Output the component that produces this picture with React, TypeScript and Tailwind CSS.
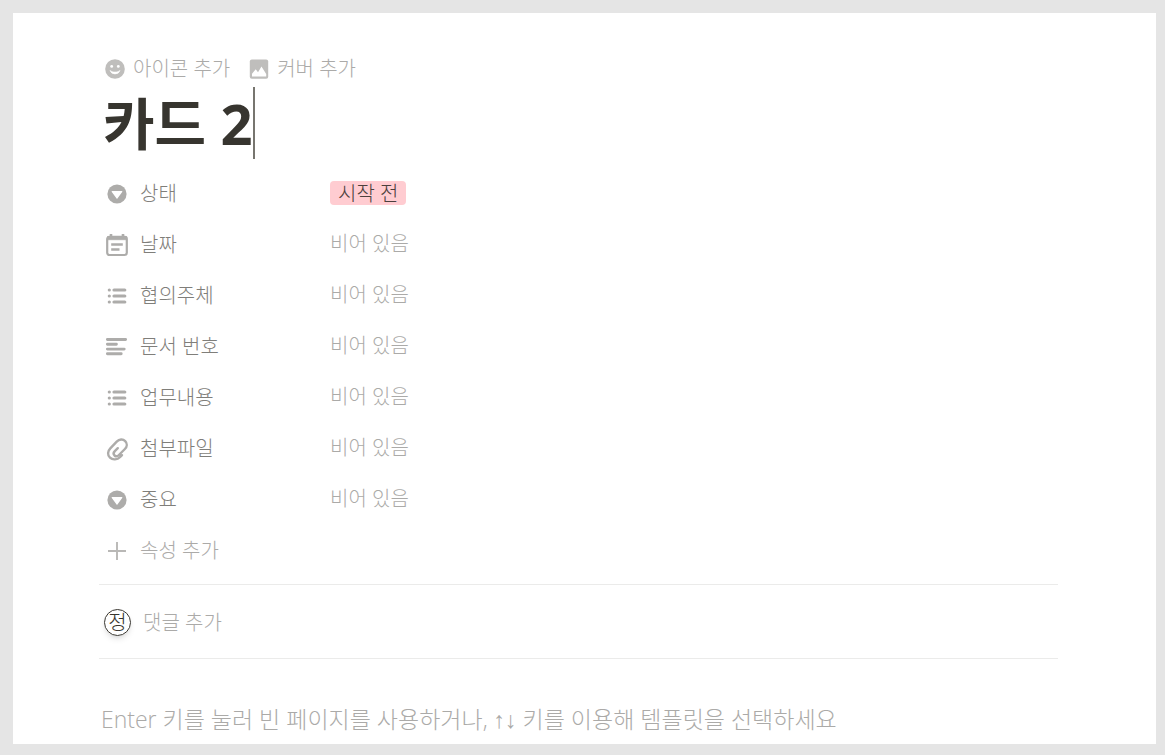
import type { ReactNode } from 'react';

function SmileIcon() {
  return (
    <svg viewBox="0 0 20 20" className="size-5 shrink-0" aria-hidden="true">
      <circle cx="10" cy="10" r="9.8" fill="#bfbebc" />
      <circle cx="6.7" cy="7.4" r="1.4" fill="#fff" />
      <circle cx="13.3" cy="7.4" r="1.4" fill="#fff" />
      <path d="M5 11.400c2 2.200 8 2.200 10 0a5.300 5.300 0 0 1-10 0Z" fill="#fff" stroke="#fff" strokeWidth="0.6" />
    </svg>
  );
}

function CoverIcon() {
  return (
    <svg viewBox="0 0 20 20" className="size-5 shrink-0" aria-hidden="true">
      <rect x="0.8" y="0.4" width="18.4" height="19.4" rx="2" fill="#bfbebc" />
      <path d="M3 17.400v-2.600l3.700-4.600 2.300 3 3.500-5.600 4.700 7.400v2.400Z" fill="#fff" />
    </svg>
  );
}

function SelectIcon() {
  return (
    <svg viewBox="0 0 24 24" className="size-6" aria-hidden="true">
      <circle cx="12" cy="12" r="9.6" fill="#adacaa" />
      <path d="M7.200 9h9.600c.5 0 .7.5.4.9l-4.600 6.300a.7.700 0 0 1-1.200 0L6.800 9.900c-.3-.4-.1-.9.400-.9Z" fill="#fff" />
    </svg>
  );
}

function DateIcon() {
  return (
    <svg viewBox="0 0 24 24" className="size-6" aria-hidden="true" fill="none" stroke="#adacaa">
      <rect x="2.2" y="3.8" width="19.6" height="18.2" rx="2.2" strokeWidth="2.2" />
      <path d="M2.500 3.500h19v3.200h-19Z" fill="#adacaa" strokeWidth="0.8" />
      <path d="M6 1v3M18 1v3" strokeWidth="2.6" />
      <path d="M6.200 11.500h11.600M6.200 16.500h8.300" strokeWidth="2.4" />
    </svg>
  );
}

function ListIcon() {
  return (
    <svg viewBox="0 0 24 24" className="size-6" aria-hidden="true" stroke="#adacaa" strokeLinecap="round">
      <path d="M9 6h10.800M9 12h10.800M9 18h10.800" strokeWidth="3.2" />
      <path d="M4.300 6h.01M4.300 12h.01M4.300 18h.01" strokeWidth="3.2" />
    </svg>
  );
}

function TextIcon() {
  return (
    <svg viewBox="0 0 24 24" className="size-6" aria-hidden="true" stroke="#adacaa" strokeLinecap="round">
      <path d="M2.400 4.500h18.200M2.400 9.300h9M2.400 14.100h16.800M2.400 18.800h13.800" strokeWidth="2.9" />
    </svg>
  );
}

function ClipIcon() {
  return (
    <svg viewBox="0 0 24 24" className="size-6" aria-hidden="true" fill="none" stroke="#adacaa" strokeLinecap="round">
      <path
        d="M17 18.200 15.200 20C12.300 22.800 7.700 23.200 5 20.700c-2.700-2.500-2.500-6.500.3-9.400l6.400-6.700c2.600-2.600 6.300-2.700 8.500-.5 2.200 2.200 2.100 5.500-.3 7.900l-6 6c-1.500 1.500-3.200 1.600-4.400.5-1.200-1.200-1.100-2.900.3-4.300l3-3"
        strokeWidth="2.4"
      />
    </svg>
  );
}

function PlusIcon() {
  return (
    <svg viewBox="0 0 24 24" className="size-6" aria-hidden="true" stroke="#b9b8b6">
      <path d="M12 3v18M3 12h18" strokeWidth="1.9" />
    </svg>
  );
}

type Property = { name: string; icon: ReactNode; value?: string };

const properties: Property[] = [
  { name: '상태', icon: <SelectIcon />, value: '시작 전' },
  { name: '날짜', icon: <DateIcon /> },
  { name: '협의주체', icon: <ListIcon /> },
  { name: '문서 번호', icon: <TextIcon /> },
  { name: '업무내용', icon: <ListIcon /> },
  { name: '첨부파일', icon: <ClipIcon /> },
  { name: '중요', icon: <SelectIcon /> },
];

export default function App() {
  return (
    <div className="min-h-screen bg-[#e5e5e5] pt-[13px] pr-[9px] pb-[11px] pl-[13px] font-['Open_Sans','Liberation_Sans','Noto_Sans_CJK_KR',sans-serif] font-light">
      <main className="bg-white pt-[38px] pr-[98px] pb-2 pl-[86px]">
        <div className="flex h-9 items-center gap-[19px] pl-1.5 text-xl text-[#abaaa8]">
          <button type="button" className="flex items-center gap-2">
            <SmileIcon />
            아이콘 추가
          </button>
          <button type="button" className="flex items-center gap-2">
            <CoverIcon />
            커버 추가
          </button>
        </div>

        <h1 className="flex h-[72px] items-center pl-1 text-[56px] leading-[68px] font-bold text-[#37352f]">
          카드 2
          <span className="h-full w-0.5 bg-[#77756f]" aria-hidden="true" />
        </h1>

        <dl className="mt-[9px] text-xl">
          {properties.map((property) => (
            <div key={property.name} className="flex h-[51px] items-center">
              <dt className="w-[231px] shrink-0 pl-1.5">
                <button type="button" className="flex items-center gap-[11px] text-[#7f7e7a]">
                  {property.icon}
                  {property.name}
                </button>
              </dt>
              <dd className="pb-0.5">
                {property.value ? (
                  <button type="button" className="block h-6 rounded bg-[#ffccd1] px-2 leading-[26px] text-[#4b403d]">
                    {property.value}
                  </button>
                ) : (
                  <button type="button" className="block text-[#abaaa8]">
                    비어 있음
                  </button>
                )}
              </dd>
            </div>
          ))}
        </dl>

        <button type="button" className="flex h-[51px] items-center gap-[11px] pl-1.5 text-xl text-[#abaaa8]">
          <PlusIcon />
          속성 추가
        </button>

        <div className="mt-2 flex h-[75px] items-center gap-3 border-y border-[#ebebea] pt-0.5 pl-[5px] text-xl">
          <span className="flex size-[27px] items-center justify-center rounded-full border border-[#37352f] text-[#37352f] shadow-md">
            정
          </span>
          <button type="button" className="text-[#abaaa8]">
            댓글 추가
          </button>
        </div>

        <p className="mt-11 pl-0.5 text-[23px] leading-[33px] text-[#abaaa8]">
          Enter 키를 눌러 빈 페이지를 사용하거나, ↑↓ 키를 이용해 템플릿을 선택하세요
        </p>
      </main>
    </div>
  );
}
